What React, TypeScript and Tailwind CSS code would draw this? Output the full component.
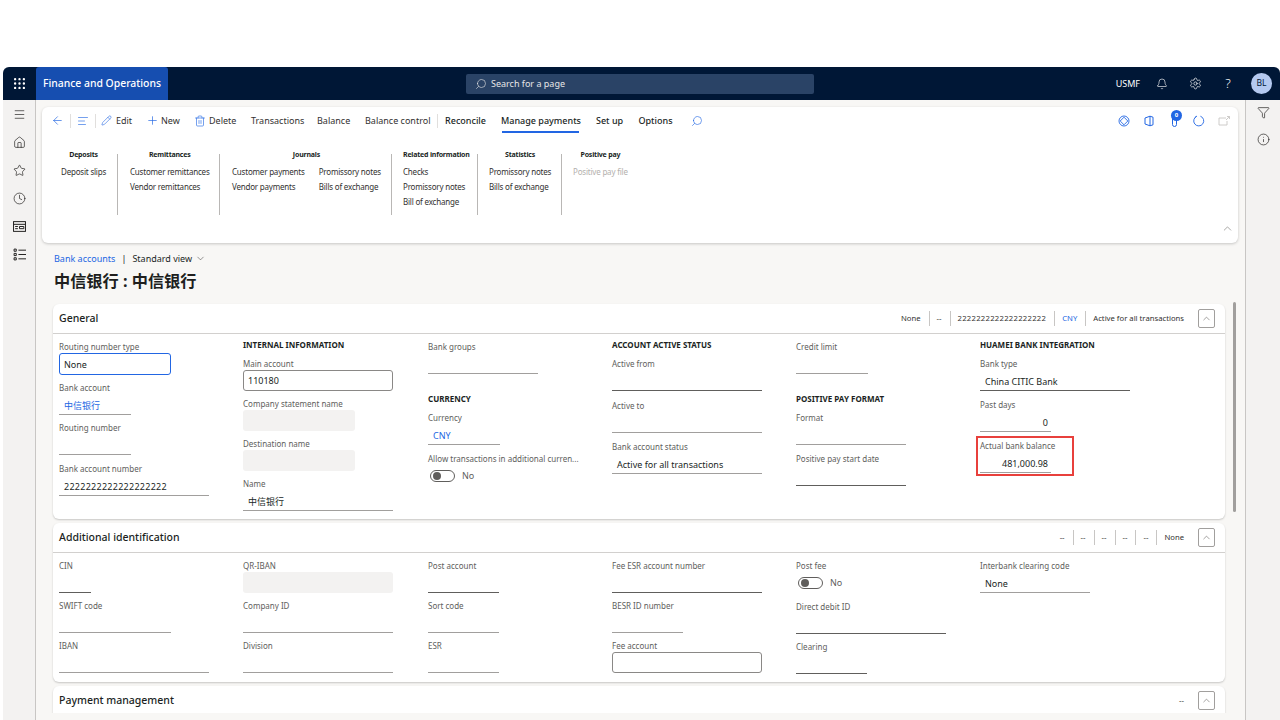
import { AlignLeft, ArrowLeft, Bell, ChevronDown, ChevronUp, Clock, Filter, Grip, Home, Info, Menu, Pencil, Plus, Search, Settings, Star, Trash2 } from "lucide-react";
import type { ReactNode } from "react";

const font = "font-['Noto_Sans','Noto_Sans_CJK_SC',sans-serif]";

function Sep() {
  return <span className="mx-[6px] h-[14px] w-px bg-[#e1dfdd]" />;
}

function Tab({ label, w, active, strong }: { label: string; w: string; active?: boolean; strong?: boolean }) {
  return (
    <span className={`relative shrink-0 whitespace-nowrap text-center ${w} ${strong ? "font-medium text-[#201f1e]" : "text-[#323130]"}`}>
      {label}
      {active && <span className="absolute left-[1px] right-[2px] top-[17px] h-[2px] bg-[#2266e3]" />}
    </span>
  );
}

function Group({ title, cols, disabled, className }: { title: string; cols: string[][]; disabled?: boolean; className: string }) {
  return (
    <div className={`h-[61px] shrink-0 border-r border-[#b9b7b5] ${className}`}>
      <div className="-mt-[6px] w-fit">
        <div className="h-[13px] whitespace-nowrap text-center text-[7px] font-bold leading-[13px] tracking-[-0.2px] text-[#201f1e]">{title}</div>
        <div className="mt-[3px] flex gap-[14px]">
          {cols.map((col, i) => (
            <div key={i} className="flex flex-col">
              {col.map((item) => (
                <span key={item} className={`h-[15px] whitespace-nowrap text-[8px] leading-[15px] tracking-[-0.2px] ${disabled ? "text-[#b3b0ad]" : "text-[#323130]"}`}>
                  {item}
                </span>
              ))}
            </div>
          ))}
        </div>
      </div>
    </div>
  );
}

type FieldProps = {
  label: string;
  value?: ReactNode;
  w?: string;
  kind?: "line" | "input" | "focus" | "off" | "toggle";
  dark?: boolean;
  right?: boolean;
  link?: boolean;
  mb?: string;
};

function Field({ label, value, w = "w-[150px]", kind = "line", dark, right, link, mb = "mb-[6.5px]" }: FieldProps) {
  const text = `text-[9px] ${link ? "text-[#2266e3]" : "text-[#201f1e]"}`;
  return (
    <div className={mb}>
      <div className="h-[14px] whitespace-nowrap text-[8px] leading-[14px] text-[#605e5c]">{label}</div>
      {kind === "line" && (
        <div className={`flex h-[20px] items-center border-b pt-[3px] ${dark ? "border-[#605e5c]" : "border-[#a19f9d]"} ${right ? "justify-end pr-[3px]" : "pl-[5px]"} ${text} ${w}`}>{value}</div>
      )}
      {kind === "input" && (
        <div className={`-mt-[1px] flex h-[21px] items-center rounded-[3px] border border-[#8a8886] pl-[4px] ${text} ${w}`}>{value}</div>
      )}
      {kind === "focus" && (
        <div className={`-my-[1px] flex h-[22px] items-center rounded-[3px] border border-[#2266e3] pl-[4px] pt-[1px] ${text} ${w}`}>{value}</div>
      )}
      {kind === "off" && <div className={`-mt-[1px] h-[21px] rounded-[3px] bg-[#f3f2f1] ${w}`} />}
      {kind === "toggle" && (
        <div className="flex h-[20px] items-center gap-[7px] pl-[2px] text-[9px] text-[#605e5c]">
          <span className="flex h-[12px] w-[25px] items-center rounded-full border border-[#605e5c] pl-[2px]">
            <span className="h-[8px] w-[8px] rounded-full bg-[#605e5c]" />
          </span>
          {value}
        </div>
      )}
    </div>
  );
}

function Heading({ children }: { children: string }) {
  return <div className="h-[17px] whitespace-nowrap text-[8px] font-bold leading-[10px] text-[#201f1e]">{children}</div>;
}

function CollapseButton() {
  return (
    <span className="ml-[14px] flex h-[19px] w-[17px] items-center justify-center rounded-[2px] border border-[#a19f9d] text-[#605e5c]">
      <ChevronUp size={11} strokeWidth={1.25} />
    </span>
  );
}

type SummaryItem = { t: string; link?: boolean; wide?: boolean };

function Summary({ items }: { items: SummaryItem[] }) {
  return (
    <div className="flex items-center text-[7.7px] text-[#323130]">
      {items.map((s, i) => (
        <span
          key={i}
          className={`flex h-[15px] items-center whitespace-nowrap pl-[7px] pr-[8px] last:pr-0 ${i ? "border-l border-[#c8c6c4]" : ""} ${s.link ? "text-[#2266e3]" : ""} ${s.wide ? "tracking-[0.27px]" : ""}`}
        >
          {s.t}
        </span>
      ))}
    </div>
  );
}

function Card({ title, summary, h, children }: { title: string; summary: SummaryItem[]; h: string; children?: ReactNode }) {
  return (
    <section className={`ml-[17px] w-[1172px] shrink-0 overflow-hidden rounded-[6px] bg-white shadow-[0_1px_2px_rgba(0,0,0,0.2)] ${h}`}>
      <div className="flex h-[30px] items-center justify-between border-b border-[#d2d0ce] pl-[6px] pr-[10px]">
        <span className="text-[10.5px] font-medium text-[#201f1e]">{title}</span>
        <div className="flex items-center">
          <Summary items={summary} />
          <CollapseButton />
        </div>
      </div>
      {children}
    </section>
  );
}

export default function App() {
  return (
    <div className={`h-[720px] w-[1280px] overflow-hidden bg-white pl-[3px] pt-[67px] ${font}`}>
      <div className="flex h-[653px] flex-col overflow-hidden rounded-t-[6px] bg-[#f8f7f5]">
        <header className="relative flex h-[33px] shrink-0 items-center bg-[#001736] text-white">
          <span className="flex w-[33px] justify-center">
            <Grip size={15} strokeWidth={1.75} />
          </span>
          <span className="flex h-full w-[132px] items-center justify-center rounded-t-[3px] bg-[#164eb0] text-[10.4px] font-medium">Finance and Operations</span>
          <div className="ml-[298px] flex h-[20px] w-[348px] items-center gap-[4px] rounded-[2px] bg-[#2a4366] pl-[9px] text-[9px] text-[#e6e6e6]">
            <Search size={12} strokeWidth={1.25} className="-scale-x-100" />
            Search for a page
          </div>
          <div className="ml-auto flex items-center pr-[8px]">
            <span className="mr-[16px] text-[9px]">USMF</span>
            <Bell size={12} strokeWidth={1.25} />
            <Settings size={13} strokeWidth={1.25} className="ml-[21px]" />
            <span className="ml-[20px] w-[12px] text-center text-[13px] font-light leading-none">?</span>
            <span className="ml-[17px] flex h-[21px] w-[21px] items-center justify-center rounded-full bg-[#b4c9f0] text-[8.5px] text-[#001736]">BL</span>
          </div>
        </header>

        <div className="flex min-h-0 flex-1">
          <nav className="flex w-[33px] shrink-0 flex-col items-center gap-[15px] border-r border-[#c8c6c4] bg-[#f3f2f1] pt-[8px] text-[#201f1e]">
            <Menu size={13} strokeWidth={1.25} />
            <Home size={13} strokeWidth={1.25} />
            <Star size={13} strokeWidth={1.25} />
            <Clock size={13} strokeWidth={1.25} />
            <svg width="13" height="13" viewBox="0 0 12 12" fill="none" stroke="currentColor" strokeWidth="0.9">
              <rect x="0.5" y="1.5" width="11" height="9" />
              <path d="M0.5 4h11M6 6h4v2H6zM2 6h2.5M2 8h2.5" />
            </svg>
            <svg width="13" height="13" viewBox="0 0 12 12" fill="none" stroke="currentColor" strokeWidth="0.9">
              <path d="M1 1h2v2H1zM1 5h2v2H1zM1 9h2v2H1zM5 2h7M5 6h7M5 10h7" />
            </svg>
          </nav>

          <main className="relative flex min-w-0 flex-1 flex-col">
            <div className="flex h-[613px] shrink-0 flex-col overflow-hidden pt-[7px]">
              <div className="relative ml-[6px] h-[136px] w-[1196px] shrink-0 rounded-[6px] bg-white shadow-[0_1px_3px_rgba(0,0,0,0.2)]">
                <div className="flex h-[27px] items-center pl-[9px] text-[9px] text-[#2266e3]">
                  <ArrowLeft size={13} strokeWidth={1.25} />
                  <Sep />
                  <AlignLeft size={12} strokeWidth={1.25} />
                  <Sep />
                  <Pencil size={11} strokeWidth={1.25} className="ml-[-1px]" />
                  <span className="ml-[4px] w-[17px] text-[#323130]">Edit</span>
                  <Plus size={13} strokeWidth={1.25} className="ml-[13px]" />
                  <span className="ml-[2px] w-[20px] text-[#323130]">New</span>
                  <Trash2 size={12} strokeWidth={1.25} className="ml-[13px]" />
                  <span className="ml-[3px] mr-[13px] w-[29px] text-[#323130]">Delete</span>
                  <div className="flex items-center gap-[15px]">
                    <Tab label="Transactions" w="w-[51px]" />
                    <Tab label="Balance" w="w-[33px]" />
                    <Tab label="Balance control" w="w-[65px]" />
                  </div>
                  <span className="mx-[7px] h-[14px] w-px bg-[#e1dfdd]" />
                  <div className="flex items-center gap-[15px]">
                    <Tab label="Reconcile" w="w-[41px]" strong />
                    <Tab label="Manage payments" w="w-[80px]" strong active />
                    <Tab label="Set up" w="w-[27px]" strong />
                    <Tab label="Options" w="w-[35px]" strong />
                  </div>
                  <Search size={12} strokeWidth={1.25} className="ml-[18px] -scale-x-100" />
                  <div className="ml-auto flex items-center gap-[13px] pr-[7px]">
                    <svg width="12" height="12" viewBox="0 0 12 12" fill="none" stroke="#2266e3" strokeWidth="0.9">
                      <circle cx="6" cy="6" r="5" />
                      <path d="M6 2.2 9.8 6 6 9.8 2.2 6z" />
                    </svg>
                    <svg width="12" height="12" viewBox="0 0 12 12" fill="none" stroke="#2266e3" strokeWidth="1">
                      <path d="M2 3 7 1.2l3 1v7.6l-3 1L2 9z" />
                      <path d="M7 1.2v9.6" />
                    </svg>
                    <span className="relative flex w-[12px] justify-center">
                      <span className="h-[12px] w-[5px] rounded-full border border-[#2266e3]" />
                      <span className="absolute -top-[5px] left-[3px] flex h-[11px] w-[11px] items-center justify-center rounded-full bg-[#2266e3] text-[6px] font-bold text-white">0</span>
                    </span>
                    <svg width="12" height="12" viewBox="0 0 12 12" fill="none" stroke="#2266e3" strokeWidth="0.9">
                      <path d="M7.4 1.2a5 5 0 1 1-3.6.1M1.8 2.6 3.6 1.2" />
                    </svg>
                    <svg width="13" height="12" viewBox="0 0 13 12" fill="none" stroke="#c8c6c4" strokeWidth="0.9">
                      <path d="M8 3H1v7h8V6M8 5l3.5-3.5M9 1.5h2.5V4" />
                    </svg>
                  </div>
                </div>
                <div className="mt-[20px] flex pl-[8px]">
                  <Group title="Deposits" className="w-[68px] pl-[11px]" cols={[["Deposit slips"]]} />
                  <Group title="Remittances" className="w-[102px] pl-[12px]" cols={[["Customer remittances", "Vendor remittances"]]} />
                  <Group title="Journals" className="w-[172px] pl-[12px]" cols={[["Customer payments", "Vendor payments"], ["Promissory notes", "Bills of exchange"]]} />
                  <Group title="Related information" className="w-[86px] pl-[11px]" cols={[["Checks", "Promissory notes", "Bill of exchange"]]} />
                  <Group title="Statistics" className="w-[84px] pl-[11px]" cols={[["Promissory notes", "Bills of exchange"]]} />
                  <Group title="Positive pay" className="border-r-0 pl-[11px]" disabled cols={[["Positive pay file"]]} />
                </div>
                <ChevronUp size={13} strokeWidth={1} className="absolute bottom-[8px] right-[4px] text-[#605e5c]" />
              </div>

              <div className="ml-[18px] mt-[9px] flex h-[12px] shrink-0 items-center text-[9px] leading-none text-[#201f1e]">
                <span className="text-[#2266e3]">Bank accounts</span>
                <span className="mx-[6px]">|</span>
                <span>Standard view</span>
                <ChevronDown size={11} strokeWidth={1} className="ml-[3px]" />
              </div>
              <h1 className="ml-[18px] mt-[3px] h-[37px] shrink-0 whitespace-nowrap text-[16.2px] font-bold leading-[28px] text-[#201f1e]">中信银行 : 中信银行</h1>

              <Card
                title="General"
                h="h-[215px]"
                summary={[{ t: "None" }, { t: "--" }, { t: "2222222222222222222", wide: true }, { t: "CNY", link: true }, { t: "Active for all transactions" }]}
              >
                <div className="grid grid-cols-[184px_185px_184px_184px_184px_1fr] pl-[6px] pt-[6px]">
                  <div>
                    <Field label="Routing number type" value="None" w="w-[112px]" kind="focus" />
                    <Field label="Bank account" value="中信银行" w="w-[72px]" link />
                    <Field label="Routing number" w="w-[72px]" />
                    <Field label="Bank account number" value={<span className="tracking-[0.27px]">2222222222222222222</span>} />
                  </div>
                  <div>
                    <Heading>INTERNAL INFORMATION</Heading>
                    <Field label="Main account" value="110180" kind="input" mb="mb-[6px]" />
                    <Field label="Company statement name" w="w-[112px]" kind="off" mb="mb-[6px]" />
                    <Field label="Destination name" w="w-[112px]" kind="off" mb="mb-[6px]" />
                    <Field label="Name" value="中信银行" />
                  </div>
                  <div>
                    <Field label="Bank groups" w="w-[110px]" mb="mb-[20px]" />
                    <Heading>CURRENCY</Heading>
                    <Field label="Currency" value="CNY" w="w-[72px]" link />
                    <Field label="Allow transactions in additional curren..." value="No" kind="toggle" />
                  </div>
                  <div>
                    <Heading>ACCOUNT ACTIVE STATUS</Heading>
                    <Field label="Active from" dark mb="mb-[7.5px]" />
                    <Field label="Active to" mb="mb-[7.5px]" />
                    <Field label="Bank account status" value="Active for all transactions" />
                  </div>
                  <div>
                    <Field label="Credit limit" w="w-[72px]" mb="mb-[20px]" />
                    <Heading>POSITIVE PAY FORMAT</Heading>
                    <Field label="Format" w="w-[110px]" />
                    <Field label="Positive pay start date" w="w-[110px]" dark />
                  </div>
                  <div className="relative">
                    <Heading>HUAMEI BANK INTEGRATION</Heading>
                    <Field label="Bank type" value="China CITIC Bank" dark mb="mb-[7px]" />
                    <Field label="Past days" value="0" w="w-[71px]" right mb="mb-[6.5px]" />
                    <Field label="Actual bank balance" value="481,000.98" w="w-[71px]" right />
                    <span className="absolute left-[-4px] top-[96px] h-[40px] w-[98px] border-2 border-[#e8403c]" />
                  </div>
                </div>
              </Card>

              <div className="mt-[4px] shrink-0">
                <Card
                  title="Additional identification"
                  h="h-[159px]"
                  summary={[{ t: "--" }, { t: "--" }, { t: "--" }, { t: "--" }, { t: "--" }, { t: "None" }]}
                >
                  <div className="grid grid-cols-[184px_185px_184px_184px_184px_1fr] pl-[6px] pt-[6px]">
                    <div>
                      <Field label="CIN" w="w-[32px]" dark mb="mb-[6px]" />
                      <Field label="SWIFT code" w="w-[112px]" mb="mb-[6px]" />
                      <Field label="IBAN" mb="mb-[6px]" />
                    </div>
                    <div>
                      <Field label="QR-IBAN" kind="off" mb="mb-[6px]" />
                      <Field label="Company ID" mb="mb-[6px]" />
                      <Field label="Division" mb="mb-[6px]" />
                    </div>
                    <div>
                      <Field label="Post account" w="w-[71px]" dark mb="mb-[6px]" />
                      <Field label="Sort code" w="w-[71px]" mb="mb-[6px]" />
                      <Field label="ESR" w="w-[71px]" mb="mb-[6px]" />
                    </div>
                    <div>
                      <Field label="Fee ESR account number" dark mb="mb-[6px]" />
                      <Field label="BESR ID number" w="w-[71px]" mb="mb-[6px]" />
                      <Field label="Fee account" kind="input" mb="mb-[6px]" />
                    </div>
                    <div>
                      <Field label="Post fee" value="No" kind="toggle" mb="mb-[7px]" />
                      <Field label="Direct debit ID" dark mb="mb-[6px]" />
                      <Field label="Clearing" w="w-[71px]" dark mb="mb-[6px]" />
                    </div>
                    <div>
                      <Field label="Interbank clearing code" value="None" w="w-[110px]" mb="mb-[6px]" />
                    </div>
                  </div>
                </Card>
              </div>

              <div className="mt-[4px] shrink-0">
                <Card title="Payment management" h="h-[60px]" summary={[{ t: "--" }]} />
              </div>
            </div>
            <span className="absolute left-[1197px] top-[202px] h-[210px] w-[3px] rounded-full bg-[#a19f9d]" />
          </main>

          <aside className="flex w-[35px] shrink-0 flex-col items-center gap-[14px] border-l border-[#c8c6c4] bg-[#f3f2f1] pt-[6px] text-[#201f1e]">
            <Filter size={13} strokeWidth={1.25} />
            <Info size={13} strokeWidth={1.25} />
          </aside>
        </div>
      </div>
    </div>
  );
}
